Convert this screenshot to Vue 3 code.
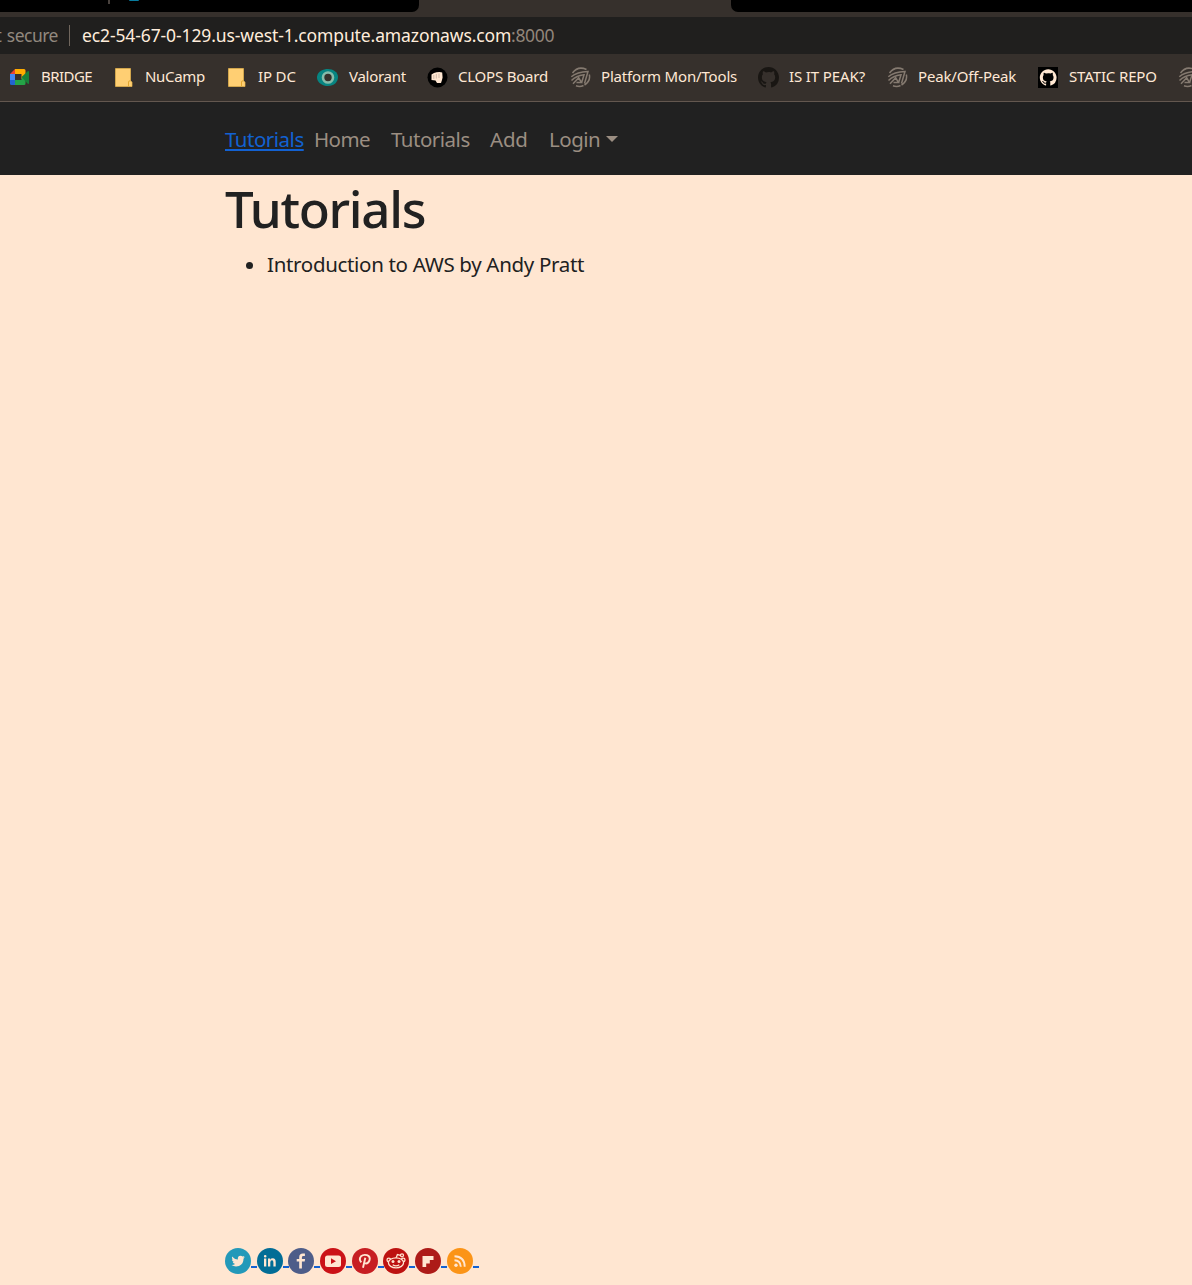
<script setup>
const bookmarks = [
  { label: 'BRIDGE', icon: 'meet', width: 52, spacing: -0.55 },
  { label: 'NuCamp', icon: 'folder', width: 61, spacing: -0.3 },
  { label: 'IP DC', icon: 'folder', width: 39, spacing: -0.15 },
  { label: 'Valorant', icon: 'eye', width: 57, spacing: -0.28 },
  { label: 'CLOPS Board', icon: 'fist', width: 91, spacing: -0.22 },
  { label: 'Platform Mon/Tools', icon: 'swirl', width: 136, spacing: -0.17 },
  { label: 'IS IT PEAK?', icon: 'github', width: 77, spacing: -0.12 },
  { label: 'Peak/Off-Peak', icon: 'swirl', width: 99, spacing: -0.17 },
  { label: 'STATIC REPO', icon: 'githubBox', width: 88, spacing: -0.13 },
  { label: '', icon: 'swirl', width: 10, spacing: 0 },
]
const cat = 'M8 0C3.58 0 0 3.58 0 8c0 3.54 2.29 6.53 5.47 7.59.4.07.55-.17.55-.38 0-.19-.01-.82-.01-1.49-2.01.37-2.53-.49-2.69-.94-.09-.23-.48-.94-.82-1.13-.28-.15-.68-.52-.01-.53.63-.01 1.08.58 1.23.82.72 1.21 1.87.87 2.33.66.07-.52.28-.87.51-1.07-1.78-.2-3.64-.89-3.64-3.95 0-.87.31-1.59.82-2.15-.08-.2-.36-1.02.08-2.12 0 0 .67-.21 2.2.82A7.6 7.6 0 0 1 8 3.86c.68 0 1.36.09 2 .27 1.53-1.04 2.2-.82 2.2-.82.44 1.1.16 1.92.08 2.12.51.56.82 1.27.82 2.15 0 3.07-1.87 3.75-3.65 3.95.29.25.54.73.54 1.48 0 1.07-.01 1.93-.01 2.2 0 .21.15.46.55.38A8.01 8.01 0 0 0 16 8c0-4.42-3.58-8-8-8Z'
const navLinks = [
  { label: 'Home', width: 56, spacing: -0.6 },
  { label: 'Tutorials', width: 78, spacing: -0.5 },
  { label: 'Add', width: 38, spacing: -0.2 },
]
const socials = [
  { name: 'twitter', color: '#2399b9' },
  { name: 'linkedin', color: '#026d96' },
  { name: 'facebook', color: '#4e5d89' },
  { name: 'youtube', color: '#cb1217' },
  { name: 'pinterest', color: '#c71e22' },
  { name: 'reddit', color: '#bd1210' },
  { name: 'flipboard', color: '#ad1b18' },
  { name: 'rss', color: '#fb9417' },
]
</script>

<template>
  <div class="screen">
    <div class="tabs">
      <div class="tab-group left">
        <i class="tab-divider"></i>
        <i class="tab-icon"></i>
      </div>
      <div class="tab-group right"></div>
    </div>
    <div class="address">
      <span class="secure"><span>t secure</span></span>
      <i class="divider"></i>
      <span class="host">ec2-54-67-0-129.us-west-1.compute.amazonaws.com</span><span class="port">:8000</span>
    </div>
    <div class="bookmarks">
      <div v-for="(b, i) in bookmarks" :key="i" class="bookmark">
        <svg v-if="b.icon === 'meet'" class="bicon" viewBox="0 0 21 21">
          <path d="M0 7 5 2V7Z" fill="#e94335" />
          <path d="M5 2h9q1.500 0 1.500 1.500V9l-4 3V7H5Z" fill="#ffac00" />
          <path d="M0 7h5v6H0Z" fill="#4285f4" />
          <path d="M0 13h5v5H1.500Q0 18 0 16.500Z" fill="#2264d0" />
          <path d="M5 13h6.500v-2l4-3v8.500q0 1.500-1.500 1.500H5Z" fill="#24a447" />
          <path d="m11.500 10 6-5.500q1.500-1 1.500 .5v11q0 1.500-1.500 .5Z" fill="#188038" />
        </svg>
        <svg v-else-if="b.icon === 'folder'" class="bicon" viewBox="0 0 21 21">
          <path d="M1.500 1.500h15v12.500l1.500 1v4.500h-16.500Z" fill="#ffcf73" stroke="#e9b64c" stroke-width=".7" />
          <path d="M14.500 19v-4q0-1.200 1.500-1.200" fill="none" stroke="#e3a72f" />
        </svg>
        <svg v-else-if="b.icon === 'eye'" class="bicon eye" viewBox="0 0 21 21">
          <path d="M0 9.500C1 4 6 2 11 2s10 3 10 8-4 9-10 9S-.5 15 0 9.500Z" fill="#078481" />
          <circle cx="11" cy="10.500" r="5" fill="#36302b" stroke="#86bbaa" stroke-width="2.600" />
        </svg>
        <svg v-else-if="b.icon === 'fist'" class="bicon" viewBox="0 0 21 21">
          <circle cx="10.500" cy="10.500" r="10" fill="#000" />
          <path d="M4.500 7.500 7 6l2.500-.8 3-.2 2.700.6.400 5-.6 2.500-1 3H10L8.500 13.500 4.500 13Z" fill="#ffe7d2" />
          <path d="M6.800 8v4M9.300 7v4.500M12 6.500v4.500" stroke="#a28f80" stroke-width=".5" />
        </svg>
        <svg v-else-if="b.icon === 'swirl'" class="bicon swirl" viewBox="0 0 21 21">
          <path d="M2.500 6Q8-1.500 16.500 2.500M1.300 9.800Q7 4.800 18 4.500L14.500 16.500M1.500 13.500Q6 9 14 7.800L11.500 16M3 16.800 8.700 10.800 11.500 15.500H6.500M6 18.800q4 1.600 7.500-.3M19.300 7.500Q20.800 14 14.500 18" />
        </svg>
        <svg v-else-if="b.icon === 'github'" class="bicon" viewBox="0 0 16 16">
          <path :d="cat" fill="#191613" />
        </svg>
        <svg v-else class="bicon" viewBox="0 0 21 21">
          <path d="M0 0h20v21H0Z" fill="#000" />
          <path :d="cat" fill="#ffe7d2" transform="translate(1.800 2.200) scale(1.050)" />
        </svg>
        <span class="blabel" :style="{ width: b.width + 'px', letterSpacing: b.spacing + 'px' }">{{ b.label }}</span>
      </div>
    </div>
    <nav class="navbar">
      <a class="brand">Tutorials</a>
      <a v-for="n in navLinks" :key="n.label" class="link" :style="{ width: n.width + 'px', letterSpacing: n.spacing + 'px' }">{{ n.label }}</a>
      <a class="link login">Login</a>
      <i class="caret"></i>
    </nav>
    <main class="content">
      <h1>Tutorials</h1>
      <ul>
        <li><span>Introduction to AWS by Andy Pratt</span></li>
      </ul>
    </main>
    <footer class="footer">
      <a v-for="s in socials" :key="s.name" class="social">
        <svg viewBox="0 0 26 26">
          <circle cx="13" cy="13" r="13" :fill="s.color" />
          <path v-if="s.name === 'twitter'" class="solid" d="M7 8.600q2.600 3 5.900 3Q12.300 8 15.600 7.800q1.200 0 2 .8l1.900-.6-1.100 1.600 1.400-.3-1.300 1.500q.1 5.200-4.500 7.100-4 1.300-7.500-.8 2.300.1 3.600-1.100-1.900-.3-2.400-1.900h1.200q-2-.9-2-2.800l1.100.3Q6.400 10.500 7 8.600Z" />
          <path v-else-if="s.name === 'linkedin'" class="solid" d="M7 10.500h2.300v8H7ZM8.200 7a1.300 1.300 0 1 1 0 2.600 1.300 1.300 0 0 1 0-2.600ZM11 10.500h2.200v1.200q.8-1.400 2.600-1.400 2.900 0 2.900 3.600v4.600h-2.300v-4.100q0-2.100-1.400-2.100-1.700 0-1.700 2.100v4.100H11Z" />
          <path v-else-if="s.name === 'facebook'" class="solid" d="M11.200 20.500v-7H8.700V11h2.500V9.300q0-3.700 3.700-3.700h2v2.500h-1.500q-1.500 0-1.500 1.400V11h3.200l-.4 2.500h-2.800v7Z" />
          <template v-else-if="s.name === 'youtube'">
            <rect class="solid" x="5" y="7.500" width="16" height="11.500" rx="2.500" />
            <path d="m11 10.300 5 2.900-5 2.900Z" :fill="s.color" />
          </template>
          <path v-else-if="s.name === 'pinterest'" class="line" d="M9.300 14.300Q6.500 11 9 8.300q2.500-2.200 6-1.100 3.800 1.500 2.400 5.500-1.500 3.600-4.600 2.500L12 14.300M13.300 9.800 11 19.800" stroke-width="1.900" />
          <template v-else-if="s.name === 'reddit'">
            <path class="line" d="M13 10.200 14.400 6.500l3.200.8" stroke-width="1.300" />
            <circle class="line" cx="19" cy="7.300" r="1.500" stroke-width="1.300" />
            <circle class="line" cx="5.800" cy="12" r="1.800" stroke-width="1.300" />
            <circle class="line" cx="20.200" cy="12" r="1.800" stroke-width="1.300" />
            <ellipse cx="13" cy="14.800" rx="7.600" ry="5" :fill="s.color" class="ring" />
            <circle class="solid" cx="10" cy="13.500" r="1.500" />
            <circle class="solid" cx="16" cy="13.500" r="1.500" />
            <path class="line" d="M9.700 16.700q3.300 2.200 6.600 0" stroke-width="1.200" />
          </template>
          <path v-else-if="s.name === 'flipboard'" class="solid" d="M7.500 8H18.500v4h-3.700v3.500h-3.600V19H7.500Z" />
          <template v-else>
            <circle class="solid" cx="9" cy="17.300" r="1.700" />
            <path class="line" d="M7.500 12.200q6 .2 6.300 6.500M7.500 8.300q10 .3 10.200 10.400" stroke-width="1.900" />
          </template>
        </svg><i class="underline"></i>
      </a>
    </footer>
  </div>
</template>

<style>
body { margin: 0; background: #ffe6d1; }
</style>

<style scoped>
.screen {
  width: 1192px;
  height: 1285px;
  overflow: hidden;
  display: flex;
  flex-direction: column;
  background: #ffe6d1;
  color: #212121;
  font-family: "Noto Sans", "Open Sans", sans-serif;
  white-space: nowrap;
}
.tabs { height: 17px; flex: none; display: flex; justify-content: space-between; background: #36302c; }
.tab-group { height: 12px; background: #000; overflow: hidden; }
.left { width: 419px; border-bottom-right-radius: 7px; display: flex; }
.right { width: 461px; border-bottom-left-radius: 7px; }
.tab-divider { width: 2px; height: 4px; margin-left: 108px; background: #49423e; }
.tab-icon { width: 10px; height: 1px; margin-left: 19px; background: #087c9e; border-radius: 0 0 5px 5px; }
.address {
  height: 37px; flex: none; display: flex; align-items: center;
  background: #201f1e; font-size: 17.500px; line-height: 37px;
}
.secure { width: 58px; display: flex; justify-content: flex-end; overflow: hidden; color: #91887e; letter-spacing: -0.500px; word-spacing: 1.500px; }
.divider { width: 1px; height: 21px; margin: 0 12px 0 11px; background: #70665d; }
.host { width: 429px; color: #ffeddc; letter-spacing: -0.110px; }
.port { color: #91857a; letter-spacing: -0.300px; }
.bookmarks {
  height: 47px; flex: none; display: flex; gap: 21px; padding-left: 10px;
  background: #36302c; border-bottom: 1px solid #63574f; overflow: hidden;
}
.bookmark { flex: none; display: flex; align-items: center; gap: 10px; }
.bicon { width: 21px; height: 21px; flex: none; }
.eye { margin-left: -1px; margin-right: 1px; }
.swirl path { fill: none; stroke: #857a70; stroke-width: 1.500; }
.blabel { font-size: 15px; line-height: 44px; height: 47px; color: #ffe8d5; }
.navbar {
  height: 73px; flex: none; box-sizing: border-box; display: flex; padding: 0 0 0 225px;
  background: #212121; font-size: 20.500px; line-height: 75px;
}
.brand {
  width: 79px; margin-right: 10px; color: #1261d2; letter-spacing: -0.500px;
  text-decoration: underline; text-decoration-thickness: 2px; text-underline-offset: 2px;
}
.link { margin-right: 21px; color: #9b8e82; }
.login { width: 51px; margin-right: 5px; letter-spacing: -0.500px; }
.caret { margin-top: 34px; width: 0; height: 0; border: 6.500px solid transparent; border-width: 6px 6.500px 0; border-top-color: #9b8e82; margin-left: .5px; }
.content { flex: 1; padding-left: 225px; }
h1 { margin: 0; font-size: 51px; font-weight: 500; line-height: 62px; padding-top: 2px; letter-spacing: -1.300px; }
ul { margin: 10px 0 0; padding-left: 42px; font-size: 20.500px; line-height: 31px; }
li span { letter-spacing: -0.320px; }
.footer { height: 37px; flex: none; display: flex; padding-left: 225px; }
.social { display: flex; width: 31.700px; height: 26px; align-items: flex-start; }
.social svg { width: 26px; height: 26px; flex: none; }
.underline { width: 6px; height: 2px; margin-top: 18px; background: #1261d2; flex: none; }
.solid { fill: #ffe6d1; }
.line { fill: none; stroke: #ffe6d1; }
.ring { stroke: #ffe6d1; stroke-width: 1.300; }
</style>
